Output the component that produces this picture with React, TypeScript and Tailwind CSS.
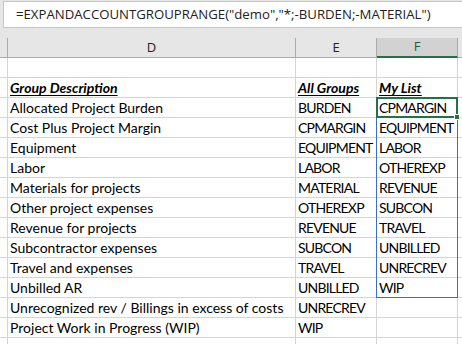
import React from "react";

const rows: [string, string, string][] = [
    ["Allocated Project Burden", "BURDEN", "CPMARGIN"],
    ["Cost Plus Project Margin", "CPMARGIN", "EQUIPMENT"],
    ["Equipment", "EQUIPMENT", "LABOR"],
    ["Labor", "LABOR", "OTHEREXP"],
    ["Materials for projects", "MATERIAL", "REVENUE"],
    ["Other project expenses", "OTHEREXP", "SUBCON"],
    ["Revenue for projects", "REVENUE", "TRAVEL"],
    ["Subcontractor expenses", "SUBCON", "UNBILLED"],
    ["Travel and expenses", "TRAVEL", "UNRECREV"],
    ["Unbilled AR", "UNBILLED", "WIP"],
    ["Unrecognized rev / Billings in excess of costs", "UNRECREV", ""],
    ["Project Work in Progress (WIP)", "WIP", ""],
];

const cell = "h-[20px] border-r border-b border-[#d4d4d4] px-[2px] leading-[19px] whitespace-nowrap overflow-visible";

const Row = ({d, e, f, head}: {d: string; e: string; f: string; head?: boolean}) => {
    const txt = head ? "font-bold italic underline underline-offset-2" : "";
    const caps = head ? "" : "tracking-[-0.8px]";
    return (
        <>
            <div className="h-[20px] border-r border-b border-[#d4d4d4]" />
            <div className={`${cell} ${txt}`}>{d}</div>
            <div className={`${cell} ${txt} ${caps}`}>{e}</div>
            <div className={`${cell} ${txt} ${caps}`}>{f}</div>
            <div className="h-[20px] border-b border-[#d4d4d4]" />
        </>
    );
};

export default function App() {
    return (
        <div className="w-[462px] h-[344px] overflow-hidden bg-white relative">
            {/* formula bar */}
            <div className="bg-[#e6e6e6] pt-[1px] pl-[3px] h-[38px]">
                <div className="h-[27px] bg-white border border-[#c6c6c6] border-r-0 pl-[12px] leading-[25px] text-[13.2px] text-[#222] whitespace-nowrap" style={{fontFamily: '"Open Sans", sans-serif'}}>
                    =EXPANDACCOUNTGROUPRANGE("demo","*;-BURDEN;-MATERIAL")
                </div>
            </div>

            {/* column headers */}
            <div className="grid grid-cols-[8px_288px_81px_81px_1fr] bg-[#e6e6e6] text-[13px] text-[#222]" style={{fontFamily: '"Open Sans", sans-serif'}}>
                <div className="h-[20px] border-r border-b border-[#ababab]" />
                <div className="h-[20px] border-r border-b border-[#ababab] flex items-center justify-center">D</div>
                <div className="h-[20px] border-r border-b border-[#ababab] flex items-center justify-center">E</div>
                <div className="h-[20px] border-r border-b-2 border-b-[#217346] border-r-[#ababab] bg-[#d2d2d2] flex items-center justify-center text-[#1d5e3b]">F</div>
                <div className="h-[20px] border-b border-[#ababab]" />
            </div>

            {/* cells */}
            <div className="grid grid-cols-[8px_288px_81px_81px_1fr] text-[14px] text-black" style={{fontFamily: 'Lato, "Liberation Sans", sans-serif'}}>
                <Row d="" e="" f="" />
                <Row d="Group Description" e="All Groups" f="My List" head />
                {rows.map(([d, e, f]) => (
                    <Row key={d} d={d} e={e} f={f} />
                ))}
                <Row d="" e="" f="" />
            </div>

            {/* selection */}
            <div className="absolute left-[376px] top-[97px] w-[82px] h-[201px] border border-[#3a6fc4] pointer-events-none" />
            <div className="absolute left-[376px] top-[97px] w-[82px] h-[21px] border-2 border-[#217346] pointer-events-none" />
            <div className="absolute left-[454px] top-[114px] w-[6px] h-[6px] bg-[#217346] border border-white pointer-events-none" />
        </div>
    );
}
